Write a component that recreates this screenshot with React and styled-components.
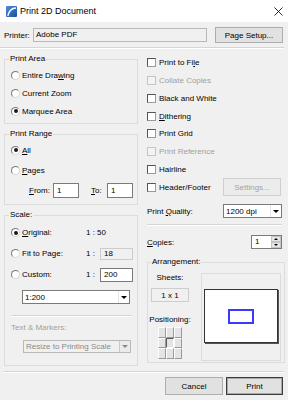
import React from 'react';
import styled, { createGlobalStyle } from 'styled-components';

const GlobalStyle = createGlobalStyle`
  html, body {
    margin: 0;
    padding: 0;
    background: #f0f0f0;
  }
  * {
    box-sizing: border-box;
  }
`;

const Dialog = styled.div`
  width: 288px;
  height: 400px;
  overflow: hidden;
  background: #f0f0f0;
  font-family: "Liberation Sans", Arial, sans-serif;
  font-size: 8px;
  color: #000;
  display: flex;
  flex-direction: column;
`;

const TitleBar = styled.div`
  height: 22px;
  flex-shrink: 0;
  background: #fff;
  display: flex;
  align-items: center;
  padding: 0 5px 0 6px;
`;

const TitleText = styled.span`
  font-size: 9px;
  margin-left: 3px;
`;

const CloseIcon = styled.svg`
  margin-left: auto;
`;

const PrinterRow = styled.div`
  display: flex;
  align-items: center;
  height: 16px;
  margin-top: 5px;
  padding: 0 5px 0 4px;
`;

const PrinterLabel = styled.span`
  width: 29px;
`;

const ReadOnlyField = styled.div`
  width: 174px;
  height: 14px;
  border: 1px solid #b9b9b9;
  background: #f0f0f0;
  padding-left: 2px;
  line-height: 12px;
`;

const Button = styled.button`
  width: ${p => p.$w}px;
  height: ${p => p.$h || 18}px;
  margin-left: ${p => (p.$push ? 'auto' : '0')};
  padding: 0;
  font: inherit;
  color: #000;
  background: #e1e1e1;
  border: 1px solid #adadad;
  &:disabled {
    color: #a3a3a3;
    background: #ececec;
    border-color: #cfcfcf;
  }
`;

const DefaultButton = styled(Button)`
  border: 1px solid #3c3c3c;
  box-shadow: inset 0 0 0 1px #a8a8a8;
`;

const Separator = styled.div`
  height: 2px;
  border-top: 1px solid #d5d5d5;
  border-bottom: 1px solid #fff;
  margin: ${p => p.$m || '0'};
`;

const Main = styled.div`
  display: grid;
  grid-template-columns: 134px 138px;
  column-gap: 9px;
  align-items: start;
  padding-left: 4px;
  margin-top: 5px;
`;

const Column = styled.div`
  display: flex;
  flex-direction: column;
  gap: ${p => p.$gap || 0}px;
`;

const Group = styled.fieldset`
  margin: ${p => p.$m || '0'};
  min-width: 0;
  height: ${p => p.$h}px;
  border: 1px solid #dcdcdc;
  padding: ${p => p.$pad || '0 6px'};
`;

const Legend = styled.legend`
  padding: 0 1px;
  margin-left: ${p => p.$ml || -2}px;
  line-height: 10px;
  font-size: inherit;
`;

const OptionRow = styled.div`
  display: flex;
  align-items: center;
  height: ${p => p.$h}px;
  color: ${p => (p.$disabled ? '#a0a0a0' : '#000')};
  padding-right: ${p => p.$pr || 0}px;
`;

const RadioMark = styled.span`
  width: 9px;
  height: 9px;
  flex-shrink: 0;
  margin-right: 2px;
  border-radius: 50%;
  background: #fff;
  border: 1px solid;
  border-color: #7a7a7a #d6d6d6 #d6d6d6 #7a7a7a;
  display: flex;
  align-items: center;
  justify-content: center;
  &::after {
    content: '';
    width: 4px;
    height: 4px;
    border-radius: 50%;
    background: ${p => (p.$checked ? '#1a1a1a' : 'transparent')};
  }
`;

const CheckMark = styled.span`
  width: 9px;
  height: 9px;
  flex-shrink: 0;
  margin-right: 3px;
  border: 1px solid;
  border-color: ${p => (p.$disabled ? '#c4c4c4' : '#555 #9a9a9a #9a9a9a #555')};
  background: ${p => (p.$disabled ? '#f3f3f3' : '#fff')};
`;

const Key = styled.span`
  text-decoration: underline;
`;

const Padded = styled.div`
  padding-top: ${p => p.$pt || 0}px;
`;

const RangeRow = styled.div`
  display: flex;
  align-items: center;
  height: 20px;
  padding-left: 18px;
`;

const FieldLabel = styled.span`
  width: ${p => p.$w}px;
  margin-left: ${p => p.$ml || 0}px;
  flex-shrink: 0;
`;

const TextBox = styled.input`
  width: ${p => p.$w}px;
  height: ${p => p.$h}px;
  padding: 0 0 0 3px;
  font: inherit;
  color: #000;
  outline: none;
  border: 1px solid ${p => (p.$disabled ? '#cccccc' : '#7a7a7a')};
  background: ${p => (p.$disabled ? '#f0f0f0' : '#fff')};
`;

const Select = styled.div`
  display: flex;
  flex-shrink: 0;
  width: ${p => p.$w}px;
  height: ${p => p.$h}px;
  margin: ${p => p.$m || '0'};
  border: 1px solid ${p => (p.$disabled ? '#b8b8b8' : '#7a7a7a')};
  background: ${p => (p.$disabled ? '#f0f0f0' : '#fff')};
  color: ${p => (p.$disabled ? '#8a8a8a' : '#000')};
`;

const SelectValue = styled.span`
  flex: 1;
  display: flex;
  align-items: center;
  padding-left: 2px;
  white-space: nowrap;
  overflow: hidden;
`;

const SelectArrow = styled.span`
  width: 11px;
  display: flex;
  align-items: center;
  justify-content: center;
  border-left: 1px solid ${p => (p.$disabled ? '#c8c8c8' : '#e4e4e4')};
  background: ${p => (p.$disabled ? '#ebebeb' : '#fff')};
  &::after {
    content: '';
    border-left: 3px solid transparent;
    border-right: 3px solid transparent;
    border-top: 3px solid ${p => (p.$disabled ? '#8a8a8a' : '#000')};
  }
`;

const SubLabel = styled.div`
  line-height: 10px;
  margin-top: ${p => p.$mt || 0}px;
  color: ${p => (p.$disabled ? '#a0a0a0' : '#000')};
`;

const FormRow = styled.div`
  display: flex;
  align-items: center;
  justify-content: space-between;
  height: 14px;
  margin-top: ${p => p.$mt || 0}px;
  padding-right: 3px;
`;

const Spinner = styled.div`
  display: flex;
  width: 31px;
  height: 14px;
  border: 1px solid #7a7a7a;
  background: #fff;
`;

const SpinValue = styled.span`
  flex: 1;
  padding-left: 3px;
  line-height: 12px;
`;

const SpinButtons = styled.div`
  width: 10px;
  display: flex;
  flex-direction: column;
`;

const SpinButton = styled.span`
  flex: 1;
  background: #e6e6e6;
  border: 1px solid #c4c4c4;
  display: flex;
  align-items: center;
  justify-content: center;
  &::after {
    content: '';
    border-left: 2px solid transparent;
    border-right: 2px solid transparent;
    ${p => (p.$up ? 'border-bottom' : 'border-top')}: 2px solid #000;
  }
`;

const ArrangeBody = styled.div`
  display: flex;
  gap: 9px;
  padding-top: 6px;
`;

const ArrangeSide = styled.div`
  width: 44px;
  display: flex;
  flex-direction: column;
  align-items: center;
`;

const SheetBox = styled.div`
  width: 38px;
  height: 14px;
  margin-top: 5px;
  border: 1px solid #cdcdcd;
  display: flex;
  align-items: center;
  justify-content: center;
`;

const PosGrid = styled.div`
  display: grid;
  grid-template-columns: repeat(3, 8px);
  grid-template-rows: repeat(3, 1fr);
  width: 24px;
  height: 32px;
  margin-top: 2px;
`;

const PosCell = styled.span`
  background: #e4e4e4;
  border: 1px solid;
  border-color: ${p => (p.$active ? '#5a5a5a #fff #fff #5a5a5a' : '#fff #9a9a9a #9a9a9a #fff')};
`;

const PreviewFrame = styled.div`
  flex: 1;
  height: 88px;
  border: 1px solid #dcdcdc;
  display: flex;
  justify-content: center;
  align-items: flex-start;
  padding-top: 15px;
`;

const PageSheet = styled.div`
  width: 74px;
  height: 54px;
  background: #fff;
  border: 1px solid #333;
  box-shadow: 1px 1px 0 #555;
  display: flex;
  align-items: center;
  justify-content: center;
`;

const PrintRegion = styled.div`
  width: 26px;
  height: 15px;
  border: 2px solid #3a3aff;
`;

const ButtonRow = styled.div`
  display: flex;
  justify-content: flex-end;
  gap: 3px;
  margin-top: 4px;
  padding-right: 5px;
`;

function Radio({ checked, children }) {
  return (
    <OptionRow $h={18}>
      <RadioMark $checked={checked} />
      {children}
    </OptionRow>
  );
}

function Check({ disabled, children, extra }) {
  return (
    <OptionRow $h={17.75} $disabled={disabled} $pr={extra ? 4 : 0}>
      <CheckMark $disabled={disabled} />
      {children}
      {extra}
    </OptionRow>
  );
}

function ScaleRow({ checked, label, children }) {
  return (
    <OptionRow $h={21}>
      <RadioMark $checked={checked} />
      <FieldLabel $w={64}>{label}</FieldLabel>
      {children}
    </OptionRow>
  );
}

function Dropdown({ value, w, h, m, disabled }) {
  return (
    <Select $w={w} $h={h} $m={m} $disabled={disabled}>
      <SelectValue>{value}</SelectValue>
      <SelectArrow $disabled={disabled} />
    </Select>
  );
}

export default function App() {
  const cells = [0, 1, 2, 3, 4, 5, 6, 7, 8];
  return (
    <>
      <GlobalStyle />
      <Dialog>
        <TitleBar>
          <svg width="11" height="11" viewBox="0 0 11 11">
            <defs>
              <linearGradient id="ico" x1="0" y1="0" x2="1" y2="1">
                <stop offset="0" stopColor="#4a8ee0" />
                <stop offset="1" stopColor="#1c4f9e" />
              </linearGradient>
            </defs>
            <rect width="11" height="11" rx="1" fill="url(#ico)" />
            <path d="M1.8 10 Q3.5 2.2 10 2" fill="none" stroke="#fff" strokeWidth="1.3" />
          </svg>
          <TitleText>Print 2D Document</TitleText>
          <CloseIcon width="9" height="9" viewBox="0 0 9 9">
            <path d="M0.5 0.5 L8.5 8.5 M8.5 0.5 L0.5 8.5" stroke="#111" strokeWidth="0.9" />
          </CloseIcon>
        </TitleBar>

        <PrinterRow>
          <PrinterLabel>Printer:</PrinterLabel>
          <ReadOnlyField>Adobe PDF</ReadOnlyField>
          <Button $w={68} $h={16} $push>Page Setup...</Button>
        </PrinterRow>

        <Separator $m="4px 4px 0 0" />

        <Main>
          <Column $gap={5}>
            <Group $h={70}>
              <Legend>Print Area</Legend>
              <Padded $pt={2}>
                <Radio>Entire Dra<Key>w</Key>ing</Radio>
                <Radio>Current Zoom</Radio>
                <Radio checked>Marquee Area</Radio>
              </Padded>
            </Group>

            <Group $h={76}>
              <Legend>Print Range</Legend>
              <Padded $pt={1}>
                <OptionRow $h={20}>
                  <RadioMark $checked />
                  <Key>A</Key>ll
                </OptionRow>
                <OptionRow $h={20}>
                  <RadioMark />
                  <Key>P</Key>ages
                </OptionRow>
                <RangeRow>
                  <FieldLabel $w={24}><Key>F</Key>rom:</FieldLabel>
                  <TextBox $w={26} $h={15} defaultValue="1" />
                  <FieldLabel $w={16} $ml={12}><Key>T</Key>o:</FieldLabel>
                  <TextBox $w={26} $h={15} defaultValue="1" />
                </RangeRow>
              </Padded>
            </Group>

            <Group $h={156}>
              <Legend>Scale:</Legend>
              <Padded $pt={2}>
                <ScaleRow checked label={<><Key>O</Key>riginal:</>}>1 : 50</ScaleRow>
                <ScaleRow label="Fit to Page:">
                  <FieldLabel $w={14}>1 :</FieldLabel>
                  <TextBox $w={33} $h={12} $disabled readOnly defaultValue="18" />
                </ScaleRow>
                <ScaleRow label="Custom:">
                  <FieldLabel $w={14}>1 :</FieldLabel>
                  <TextBox $w={33} $h={14} defaultValue="200" />
                </ScaleRow>
              </Padded>
              <Dropdown value="1:200" w={108} h={14} m="5px 0 0 11px" />
              <Separator $m="11px 0 0 0" />
              <SubLabel $mt={6} $disabled>Text &amp; Markers:</SubLabel>
              <Dropdown value="Resize to Printing Scale" w={108} h={13} m="7px 0 0 12px" disabled />
            </Group>
          </Column>

          <Column>
            <Check>Print to Fi<Key>l</Key>e</Check>
            <Check disabled>Collate Copies</Check>
            <Check>Black and White</Check>
            <Check><Key>D</Key>ithering</Check>
            <Check>Print Grid</Check>
            <Check disabled>Print Reference</Check>
            <Check>Hairline</Check>
            <Check extra={<Button $w={58} $h={18} $push disabled>Settings...</Button>}>
              Header/Footer
            </Check>

            <FormRow $mt={8}>
              <span>Print <Key>Q</Key>uality:</span>
              <Dropdown value="1200 dpi" w={59} h={14} />
            </FormRow>

            <Separator $m="6px 3px 0 0" />

            <FormRow $mt={9}>
              <span><Key>C</Key>opies:</span>
              <Spinner>
                <SpinValue>1</SpinValue>
                <SpinButtons>
                  <SpinButton $up />
                  <SpinButton />
                </SpinButtons>
              </Spinner>
            </FormRow>

            <Group $h={106} $m="8px 0 0 0" $pad="0 3px 1px 0">
              <Legend $ml={3}>Arrangement:</Legend>
              <ArrangeBody>
                <ArrangeSide>
                  <SubLabel>Sheets:</SubLabel>
                  <SheetBox>1 x 1</SheetBox>
                  <SubLabel $mt={13}>Positioning:</SubLabel>
                  <PosGrid>
                    {cells.map(c => (
                      <PosCell key={c} $active={c === 4} />
                    ))}
                  </PosGrid>
                </ArrangeSide>
                <PreviewFrame>
                  <PageSheet>
                    <PrintRegion />
                  </PageSheet>
                </PreviewFrame>
              </ArrangeBody>
            </Group>
          </Column>
        </Main>

        <Separator $m="5px 4px 0 3px" />

        <ButtonRow>
          <Button $w={58}>Cancel</Button>
          <DefaultButton $w={57}>Print</DefaultButton>
        </ButtonRow>
      </Dialog>
    </>
  );
}
